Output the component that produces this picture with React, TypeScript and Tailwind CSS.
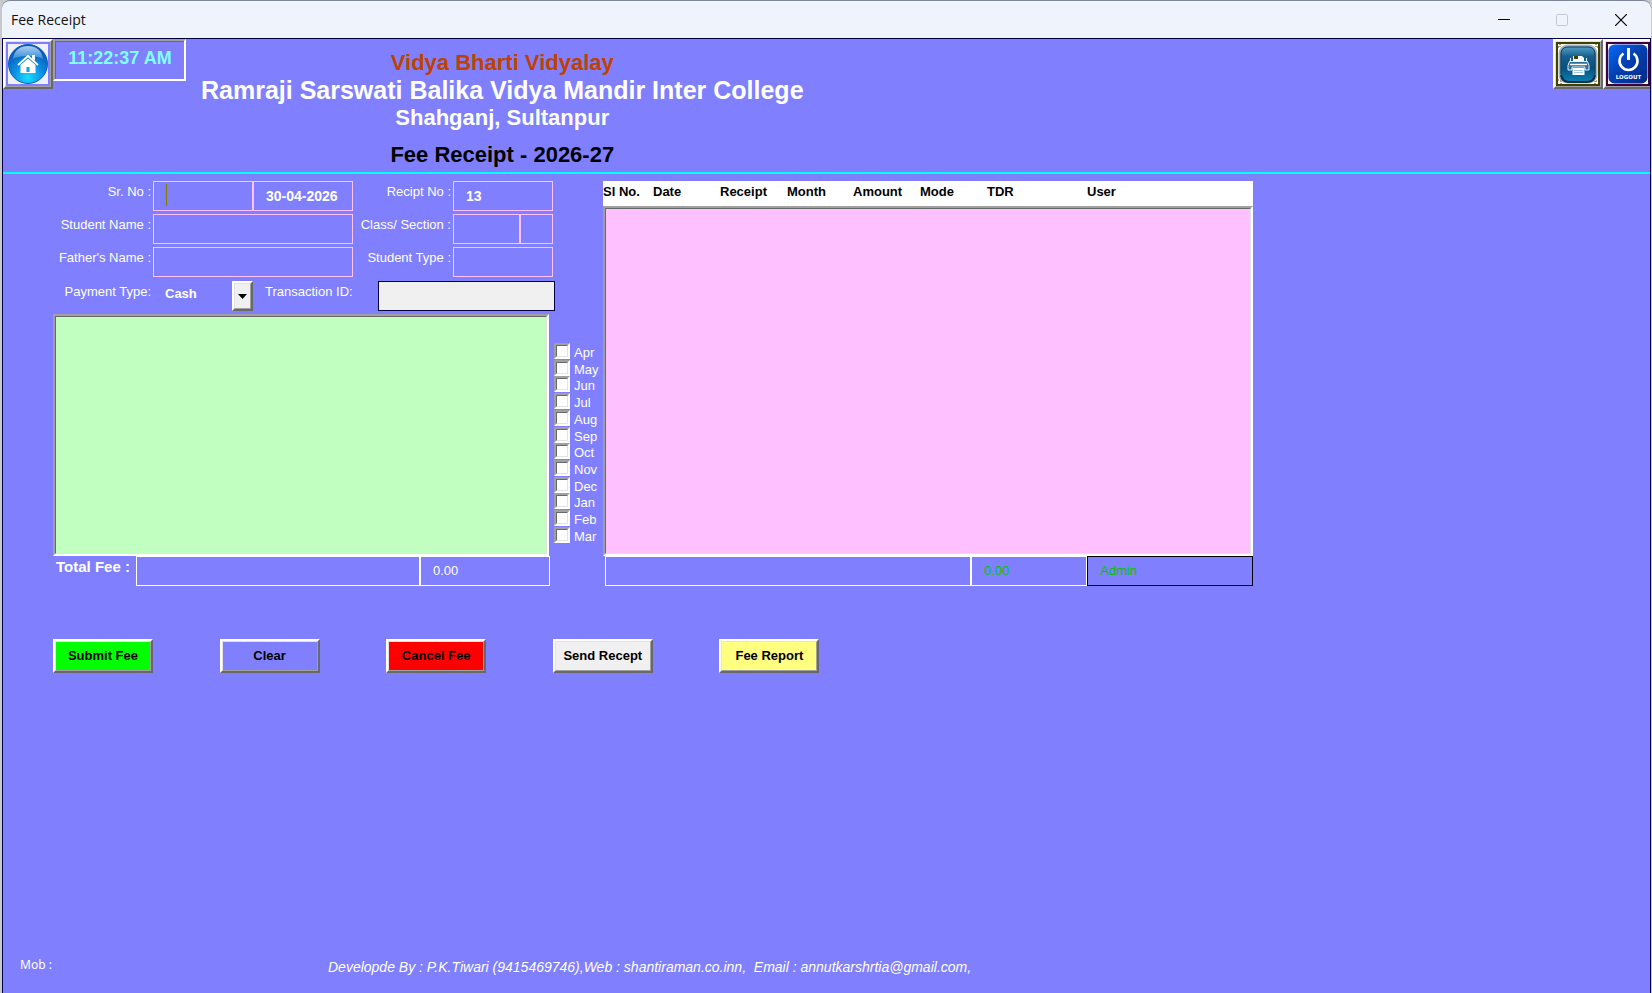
import { useState } from "react";

const MONTHS = ["Apr", "May", "Jun", "Jul", "Aug", "Sep", "Oct", "Nov", "Dec", "Jan", "Feb", "Mar"];

const COLUMNS = [
    { title: "Sl No.", width: "w-[50px]" },
    { title: "Date", width: "w-[67px]" },
    { title: "Receipt", width: "w-[67px]" },
    { title: "Month", width: "w-[66px]" },
    { title: "Amount", width: "w-[67px]" },
    { title: "Mode", width: "w-[67px]" },
    { title: "TDR", width: "w-[100px]" },
    { title: "User", width: "" },
];

const ACTIONS = [
    { title: "Submit Fee", color: "bg-[#00ff00]" },
    { title: "Clear", color: "bg-[#8080ff]" },
    { title: "Cancel Fee", color: "bg-[#ff0000]" },
    { title: "Send Recept", color: "bg-[#f0f0f0]" },
    { title: "Fee Report", color: "bg-[#ffff80]" },
];

const raised = "border-2 border-t-white border-l-white border-r-[#696969] border-b-[#696969]";
const raisedInner = "border border-t-[#e3e3e3] border-l-[#e3e3e3] border-r-[#a0a0a0] border-b-[#a0a0a0]";
const sunken = "border-2 border-t-[#a0a0a0] border-l-[#a0a0a0] border-r-white border-b-white";
const sunkenInner = "border border-t-[#696969] border-l-[#696969] border-r-[#e3e3e3] border-b-[#e3e3e3]";
const field = "h-[30px] min-w-0 border border-[#ffc0ff] bg-transparent px-3 text-sm font-bold text-white outline-none";
const label = "pr-[2px] text-right text-[13px] leading-[22px] whitespace-nowrap";
const total = "h-[30px] min-w-0 border border-white bg-transparent px-3 pb-[2px] text-[13px] outline-none";

function HomeIcon() {
    return (
        <svg viewBox="0 0 44 44" className="size-full">
            <defs>
                <radialGradient id="home-fill" cx="50%" cy="85%" r="75%">
                    <stop offset="0" stopColor="#18dcff" />
                    <stop offset="0.5" stopColor="#0b8fe4" />
                    <stop offset="1" stopColor="#0a55b4" />
                </radialGradient>
                <linearGradient id="home-gloss" x1="0" y1="0" x2="0" y2="1">
                    <stop offset="0" stopColor="#d4ecff" />
                    <stop offset="1" stopColor="#3d94dd" />
                </linearGradient>
            </defs>
            <rect width="44" height="44" fill="#8080ff" />
            <rect x="2" y="2" width="40" height="40" fill="#f0f0fa" />
            <circle cx="22" cy="22" r="19.5" fill="url(#home-fill)" stroke="#0a62b8" />
            <path d="M7 17C8 8 14 4 22 4s14 4 15 13c-6-4-24-4-30 0z" fill="url(#home-gloss)" opacity="0.8" />
            <path d="M12 23 22 14 32 23" fill="none" stroke="#fff" strokeWidth="1.8" />
            <path d="M26 13h3v6l-3-2.5z" fill="#fff" />
            <path d="M14.5 23 22 16.5l7.5 6.500v8h-15z" fill="#fff" />
            <rect x="20.5" y="25" width="3" height="5" fill="#0ba4e8" />
        </svg>
    );
}

function PrinterIcon() {
    return (
        <svg viewBox="0 0 44 44" className="size-full">
            <defs>
                <linearGradient id="print-fill" x1="0" y1="0" x2="0" y2="1">
                    <stop offset="0" stopColor="#5aa6cf" />
                    <stop offset="0.3" stopColor="#175f8e" />
                    <stop offset="0.6" stopColor="#07507f" />
                    <stop offset="1" stopColor="#0b82b4" />
                </linearGradient>
            </defs>
            <rect width="44" height="44" fill="#404000" />
            <rect x="2" y="2" width="40" height="40" fill="#fff" />
            <path d="M2 5h2V2m36 0v3h2M2 38h3v4m34 0v-3h3" fill="none" stroke="#404000" strokeDasharray="1 1" />
            <rect x="3.5" y="3.5" width="37" height="37" rx="8" fill="url(#print-fill)" stroke="#a9b3bb" strokeWidth="2" />
            <path d="M5 32V12q0-7 7-7h20q7 0 7 7v20" fill="none" stroke="#1b3c55" />
            <path d="M5 33q1 7 8 7h18q7 0 8-7" fill="none" stroke="#083048" strokeWidth="2" />
            <path d="M17 14h9l2 2v3H17z" fill="#f4fbff" />
            <rect x="18" y="14" width="4" height="3" fill="#404000" />
            <path d="M14.5 19v-3M30.5 19v-3" stroke="#dcebf5" />
            <path d="M13.5 19.500h18l1.500 4v4.500h-4v-3H16v3h-4v-4.500z" fill="#2c6d98" stroke="#e4f3fb" />
            <path d="M14 22.500h17" stroke="#fff" strokeWidth="1.500" />
            <path d="M16.500 26h12v7h-12z" fill="#fff" />
            <path d="M18 28.500h9M18 30.500h9" stroke="#a5cbe0" />
        </svg>
    );
}

function LogoutIcon() {
    return (
        <svg viewBox="0 0 44 44" className="size-full">
            <defs>
                <linearGradient id="logout-fill" x1="0" y1="0" x2="1" y2="1">
                    <stop offset="0" stopColor="#0a6af8" />
                    <stop offset="0.45" stopColor="#0340b4" />
                    <stop offset="1" stopColor="#022a84" />
                </linearGradient>
            </defs>
            <rect width="44" height="44" fill="#400040" />
            <rect x="2" y="2" width="40" height="40" fill="#fff" />
            <rect x="2.5" y="2.5" width="39" height="39" rx="6" fill="url(#logout-fill)" />
            <path d="M17.500 11.500a9 9 0 1 0 10 0" fill="none" stroke="#fff" strokeWidth="2.6" />
            <path d="M22.500 6v12" stroke="#fff" strokeWidth="3" />
            <text x="22.5" y="37" textAnchor="middle" fontSize="5.5" fontWeight="700" fontFamily="DejaVu Sans, sans-serif" fill="#fff">LOGOUT</text>
        </svg>
    );
}

function TitleBar() {
    return (
        <header className="flex h-[38px] items-center justify-between rounded-t-lg border-t border-[#7d8599] bg-[#eff3fb] pl-[9px] font-['Open_Sans','Noto_Sans',sans-serif]">
            <h1 className="text-sm text-[#111]">Fee Receipt</h1>
            <div className="flex h-full">
                <button type="button" aria-label="Minimize" className="grid w-[58px] place-items-center">
                    <svg width="12" height="12" viewBox="0 0 12 12"><path d="M0 5.500h12" stroke="#000" /></svg>
                </button>
                <button type="button" aria-label="Maximize" disabled className="grid w-[58px] place-items-center">
                    <svg width="12" height="12" viewBox="0 0 12 12"><rect x="0.5" y="0.5" width="11" height="11" rx="1" fill="none" stroke="#c3c7ce" /></svg>
                </button>
                <button type="button" aria-label="Close" className="grid w-[60px] place-items-center">
                    <svg width="12" height="12" viewBox="0 0 12 12"><path d="M0 0l12 12M12 0L0 12" stroke="#000" strokeWidth="1.2" /></svg>
                </button>
            </div>
        </header>
    );
}

function Banner() {
    return (
        <section className="flex items-start border-b-2 border-[#00ffff] pb-[3px]">
            <button type="button" aria-label="Home" className={`size-[50px] shrink-0 ${raised}`}>
                <span className={`block size-full ${raisedInner}`}><HomeIcon /></span>
            </button>
            <div className={`h-[42px] w-[133px] shrink-0 ${sunken}`}>
                <time className="block size-full border-t border-l border-[#696969] text-center text-lg leading-8 font-bold text-[#80ffff]">11:22:37 AM</time>
            </div>
            <div className="ml-[15px] pt-[10px] text-center font-bold whitespace-nowrap">
                <p className="text-[22px] leading-7 text-[#c04000]">Vidya Bharti Vidyalay</p>
                <p className="text-[25px] leading-[26px]">Ramraji Sarswati Balika Vidya Mandir Inter College</p>
                <p className="text-[22px] leading-[30px]">Shahganj, Sultanpur</p>
                <h2 className="mt-2 text-[22px] leading-7 text-black">Fee Receipt - 2026-27</h2>
            </div>
            <div className="ml-auto flex w-[97px] overflow-hidden">
                <button type="button" aria-label="Print" className={`size-[50px] shrink-0 ${raised}`}>
                    <span className={`block size-full ${raisedInner}`}><PrinterIcon /></span>
                </button>
                <button type="button" aria-label="Logout" className={`size-[50px] shrink-0 ${raised}`}>
                    <span className={`block size-full ${raisedInner}`}><LogoutIcon /></span>
                </button>
            </div>
        </section>
    );
}

function StudentForm() {
    const [serial, setSerial] = useState<string>("");

    return (
        <div>
            <div className="grid grid-cols-[100px_200px_100px_100px] gap-y-[3px]">
                <label htmlFor="serial" className={label}>Sr. No :</label>
                <div className="relative flex">
                    <input id="serial" value={serial} onChange={(e) => setSerial(e.target.value)} className={`w-1/2 ${field}`} />
                    <span className="absolute top-[3px] left-[13px] h-[22px] w-px bg-[#808000]" />
                    <input aria-label="Date" defaultValue="30-04-2026" className={`w-1/2 ${field}`} />
                </div>
                <label htmlFor="receipt" className={label}>Recipt No :</label>
                <input id="receipt" defaultValue="13" className={field} />

                <label htmlFor="student" className={label}>Student Name :</label>
                <input id="student" className={field} />
                <label htmlFor="class" className={label}>Class/ Section :</label>
                <div className="flex">
                    <input id="class" className={`w-2/3 ${field}`} />
                    <input aria-label="Section" className={`w-1/3 ${field}`} />
                </div>

                <label htmlFor="father" className={label}>Father's Name :</label>
                <input id="father" className={field} />
                <label htmlFor="type" className={label}>Student Type :</label>
                <input id="type" className={field} />
            </div>
            <div className="mt-1 flex">
                <label htmlFor="payment" className={`w-[100px] shrink-0 ${label}`}>Payment Type:</label>
                <div className="relative w-[100px] shrink-0">
                    <select id="payment" className="h-[26px] w-full appearance-none bg-transparent pl-3 text-[13px] font-bold outline-none">
                        <option>Cash</option>
                    </select>
                    <span className={`pointer-events-none absolute top-0 right-0 h-[30px] w-[21px] ${raised}`}>
                        <span className={`grid size-full place-items-center bg-[#f0f0f0] ${raisedInner}`}>
                            <svg width="9" height="5" viewBox="0 0 9 5"><path d="M0 0h9L4.500 5z" fill="#000" /></svg>
                        </span>
                    </span>
                </div>
                <label htmlFor="transaction" className="w-[125px] shrink-0 pl-3 text-[13px] leading-[22px]">Transaction ID:</label>
                <input id="transaction" className="h-[30px] w-[177px] shrink-0 border border-[#000040] bg-[#f0f0f0] px-3 text-sm text-black outline-none" />
            </div>
        </div>
    );
}

function MonthList() {
    return (
        <div className="flex h-[200px] flex-col justify-between">
            {MONTHS.map((month) => (
                <label key={month} className="flex h-4 items-start gap-1 text-[13px] leading-5">
                    <span className={`size-4 shrink-0 ${sunken}`}>
                        <input type="checkbox" className={`block size-full appearance-none bg-white checked:bg-[#000040] ${sunkenInner}`} />
                    </span>
                    {month}
                </label>
            ))}
        </div>
    );
}

function App() {
    return (
        <div className="flex min-h-screen flex-col bg-[#c9c9cd] pr-px pl-[2px] font-['Liberation_Sans',Arial,sans-serif] text-white">
            <TitleBar />
            <main className="flex grow flex-col border border-b-0 border-[#000040] bg-[#8080ff]">
                <Banner />
                <section className="flex pt-[7px] pl-[50px]">
                    <div className="w-[500px] shrink-0">
                        <StudentForm />
                        <div className={`mt-[3px] h-[242px] w-[496px] ${sunken}`}>
                            <div className={`size-full bg-[#c0ffc0] ${sunkenInner}`} />
                        </div>
                        <div className="flex w-[497px]">
                            <label htmlFor="total-fee" className="w-[83px] shrink-0 pl-[3px] text-[15px] leading-[22px] font-bold whitespace-nowrap">Total Fee :</label>
                            <input id="total-fee" className={`w-[284px] shrink-0 ${total}`} />
                            <input aria-label="Fee amount" defaultValue="0.00" className={`w-0 grow ${total}`} />
                        </div>
                    </div>
                    <div className="w-[50px] shrink-0 pt-[162px] pl-px">
                        <MonthList />
                    </div>
                    <div className="flex max-w-[650px] grow flex-col">
                        <table className="w-full table-fixed bg-white text-black">
                            <thead>
                                <tr className="h-[25px] text-left align-top text-[13px] leading-[22px]">
                                    {COLUMNS.map((column) => (
                                        <th key={column.title} className={`p-0 font-bold whitespace-nowrap ${column.width}`}>{column.title}</th>
                                    ))}
                                </tr>
                            </thead>
                        </table>
                        <div className={`grow ${sunken}`}>
                            <div className={`h-full bg-[#ffc0ff] ${sunkenInner}`} />
                        </div>
                        <div className="flex pl-[2px] text-[#00c000]">
                            <input aria-label="Receipt details" className={`grow ${total}`} />
                            <input aria-label="Receipt total" defaultValue="0.00" className={`w-[116px] ${total}`} />
                            <input aria-label="Logged in user" defaultValue="Admin" className="h-[30px] w-[166px] border border-black bg-transparent px-3 pb-[2px] text-[13px] outline-none" />
                        </div>
                    </div>
                </section>
                <section className="mt-[53px] ml-[50px] grid max-w-[833px] grid-cols-5">
                    {ACTIONS.map((action) => (
                        <button key={action.title} type="button" className={`h-[34px] w-[100px] text-[13px] font-bold text-black ${raised}`}>
                            <span className={`grid size-full place-items-center whitespace-nowrap ${raisedInner} ${action.color}`}>{action.title}</span>
                        </button>
                    ))}
                </section>
                <footer className="mt-auto flex pb-4 pl-[17px]">
                    <p className="w-[308px] font-['Noto_Sans',sans-serif] text-xs leading-4">Mob :</p>
                    <p className="text-sm leading-5 whitespace-pre italic">Developde By : P.K.Tiwari (9415469746),Web : shantiraman.co.inn,  Email : annutkarshrtia@gmail.com,</p>
                </footer>
            </main>
        </div>
    );
}

export default App;
